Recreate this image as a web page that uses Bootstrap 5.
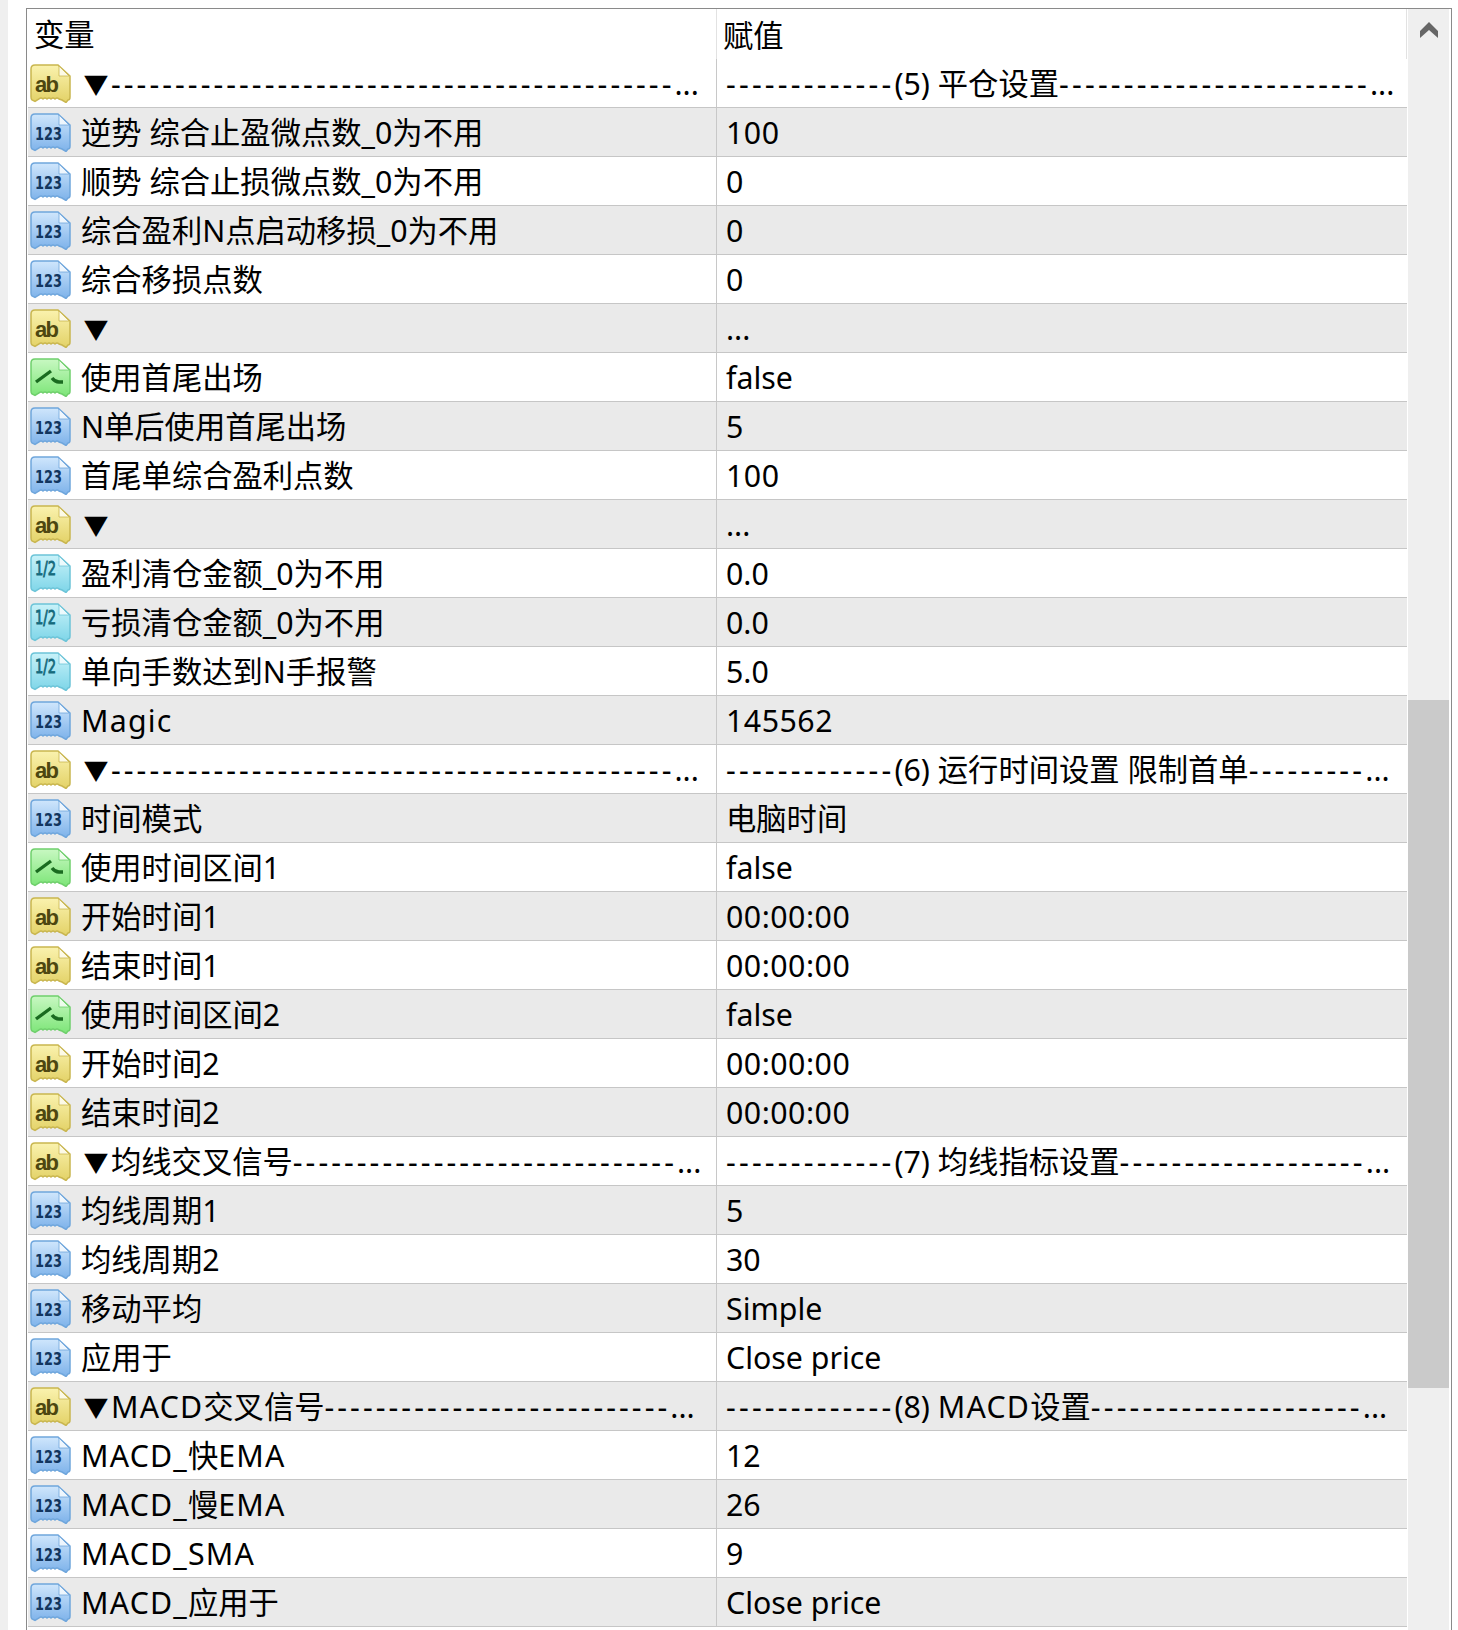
<!DOCTYPE html>
<html lang="zh"><head><meta charset="utf-8">
<link href="https://cdn.jsdelivr.net/npm/bootstrap@5.3.0/dist/css/bootstrap.min.css" rel="stylesheet">
<style>
html,body{height:1630px;overflow:hidden;background:#fff}
.pg{width:1458px;height:1630px;padding:0 6px 0 0}
.gutter{width:8px;background:#efefef;margin-right:18px;flex:none}
.frame{border:1px solid #8a8a8a;border-bottom:0;margin-top:8px;height:1622px;overflow:hidden;padding:0 2px 0 1px;background:#fff}
.grid{width:1379px;margin-right:1px;font:30.3px "Noto Sans","Noto Sans CJK SC",sans-serif;color:#000;flex:none}
.prow{height:49px;border-bottom:1px solid #c6c6c6;line-height:47px;white-space:nowrap}
.prow:nth-child(odd){background:#eaeaea}
.head{height:50px;line-height:51px;border:0;border-right:1px solid #e2e2e2;background:#fff!important}
.cvar{width:689px;border-right:1px solid #c8c8c8;display:flex;align-items:center;height:100%;overflow:hidden;flex:none}
.head .cvar{border-right-color:#e2e2e2}
.cval{padding-left:9px;padding-top:1px;flex:1;overflow:hidden}
.head .cval{padding-left:6px}
.ic{width:41px;height:39px;margin:0 10px 0 2px;flex:none}
.sb{width:41px;background:#efefef;position:relative;flex:none}
.chev{display:block;margin:13px auto 0}
.th{position:absolute;left:0;right:0;top:691px;height:688px;background:#cacaca}
.hv{margin-left:6px}
.dsh{letter-spacing:3.05px}
.cval .dsh{letter-spacing:3.2px}
.tri{display:inline-block;width:30px;text-align:center;font-size:25px;line-height:1;vertical-align:1px}
.wid{letter-spacing:1.2px}
.num{letter-spacing:.5px}
</style></head><body>
<svg width="0" height="0" class="position-absolute"><defs>
<linearGradient id="ga" x1="0" y1="0" x2="0" y2="1"><stop offset="0" stop-color="#faf2ae"/><stop offset="1" stop-color="#e3d267"/></linearGradient>
<linearGradient id="gn" x1="0" y1="0" x2="0" y2="1"><stop offset="0" stop-color="#cfe6fc"/><stop offset="1" stop-color="#7db2ea"/></linearGradient>
<linearGradient id="gb" x1="0" y1="0" x2="0" y2="1"><stop offset="0" stop-color="#c8f8c2"/><stop offset="1" stop-color="#7ce577"/></linearGradient>
<linearGradient id="gd" x1="0" y1="0" x2="0" y2="1"><stop offset="0" stop-color="#c8f2f9"/><stop offset="1" stop-color="#7dd5e8"/></linearGradient>
</defs></svg>
<div class="pg d-flex"><div class="gutter"></div>
<div class="frame d-flex flex-grow-1">
<div class="grid" id="g"></div>
<div class="sb"><svg class="chev" width="18" height="16" viewBox="0 0 18 16"><path d="M9 0l9 9v7l-9-8-9 8V9z" fill="#666"/></svg><div class="th"></div></div>
</div></div>
<script>
function D(n){return '<span class="dsh">'+'-'.repeat(n)+'</span>';}
var T='<span class="tri">▼</span>',W=function(s){return '<span class="wid">'+s+'</span>';},N=function(s){return '<span class="num">'+s+'</span>';};
var Z=N("00:00:00");
var R=[["a",T+D(44)+"...",D(13)+"(5) 平仓设置"+D(24)+"..."],
["n","逆势 综合止盈微点数_0为不用",N("100")],["n","顺势 综合止损微点数_0为不用","0"],["n","综合盈利N点启动移损_0为不用","0"],["n","综合移损点数","0"],
["a",T,"..."],["b","使用首尾出场","false"],["n","N单后使用首尾出场","5"],["n","首尾单综合盈利点数",N("100")],["a",T,"..."],
["d","盈利清仓金额_0为不用","0.0"],["d","亏损清仓金额_0为不用","0.0"],["d","单向手数达到N手报警","5.0"],["n",W("Magic"),N("145562")],
["a",T+D(44)+"...",D(13)+"(6) 运行时间设置 限制首单"+D(9)+"..."],
["n","时间模式","电脑时间"],["b","使用时间区间1","false"],["a","开始时间1",Z],["a","结束时间1",Z],["b","使用时间区间2","false"],["a","开始时间2",Z],["a","结束时间2",Z],
["a",T+"均线交叉信号"+D(30)+"...",D(13)+"(7) 均线指标设置"+D(19)+"..."],
["n","均线周期1","5"],["n","均线周期2","30"],["n","移动平均","Simple"],["n","应用于","Close price"],
["a",T+W("MACD")+"交叉信号"+D(27)+"...",D(13)+"(8) "+W("MACD")+"设置"+D(21)+"..."],
["n",W("MACD_")+"快"+W("EMA"),"12"],["n",W("MACD_")+"慢"+W("EMA"),"26"],["n",W("MACD_SMA"),"9"],["n",W("MACD_")+"应用于","Close price"]];
var S={a:"#c9b64f",n:"#6fa6dc",b:"#6fcf6c",d:"#6cc4d8"};
var SHAPE="M5 1H28L40 12V33Q40 36 38 36L36 38.5L32 36L29 35Q27 33 25 35Q23 33 21 35Q19 33 17 35Q15 33 13 35Q11 33 9 35L5 37.5L2 36Q1 35 1 33V5Q1 1 5 1Z";
function ic(t){var g={a:'<text x="5" y="28" font-size="22" font-weight="700" fill="#4d4710" font-family="Liberation Sans" textLength="24">ab</text>',
n:'<text x="5" y="26.5" font-size="17" font-weight="700" fill="#12365f" font-family="DejaVu Sans" textLength="27" lengthAdjust="spacingAndGlyphs">123</text>',
d:'<text x="5" y="21" font-size="19" stroke="#156a7c" stroke-width=".9" fill="#156a7c" font-family="DejaVu Sans" textLength="21" lengthAdjust="spacingAndGlyphs">1/2</text>',
b:'<path d="M6 24L21 13M22 20Q25 24 29 24H33" stroke="#1a6b20" stroke-width="3.4" fill="none"/>'}[t];
return '<svg class="ic" viewBox="0 0 41 39"><path d="'+SHAPE+'" fill="url(#g'+t+')" stroke="'+S[t]+'" stroke-width="1.5"/><path d="M29 2v10h10z" fill="#fff" fill-opacity=".75" stroke="'+S[t]+'" stroke-width=".8"/>'+g+'</svg>';}
var h='<div class="prow head d-flex"><div class="cvar"><span class="hv">变量</span></div><div class="cval">赋值</div></div>';
R.forEach(function(r){h+='<div class="prow d-flex"><div class="cvar">'+ic(r[0])+'<span>'+r[1]+'</span></div><div class="cval">'+r[2]+'</div></div>';});
document.getElementById('g').innerHTML=h;
</script>
</body></html>
